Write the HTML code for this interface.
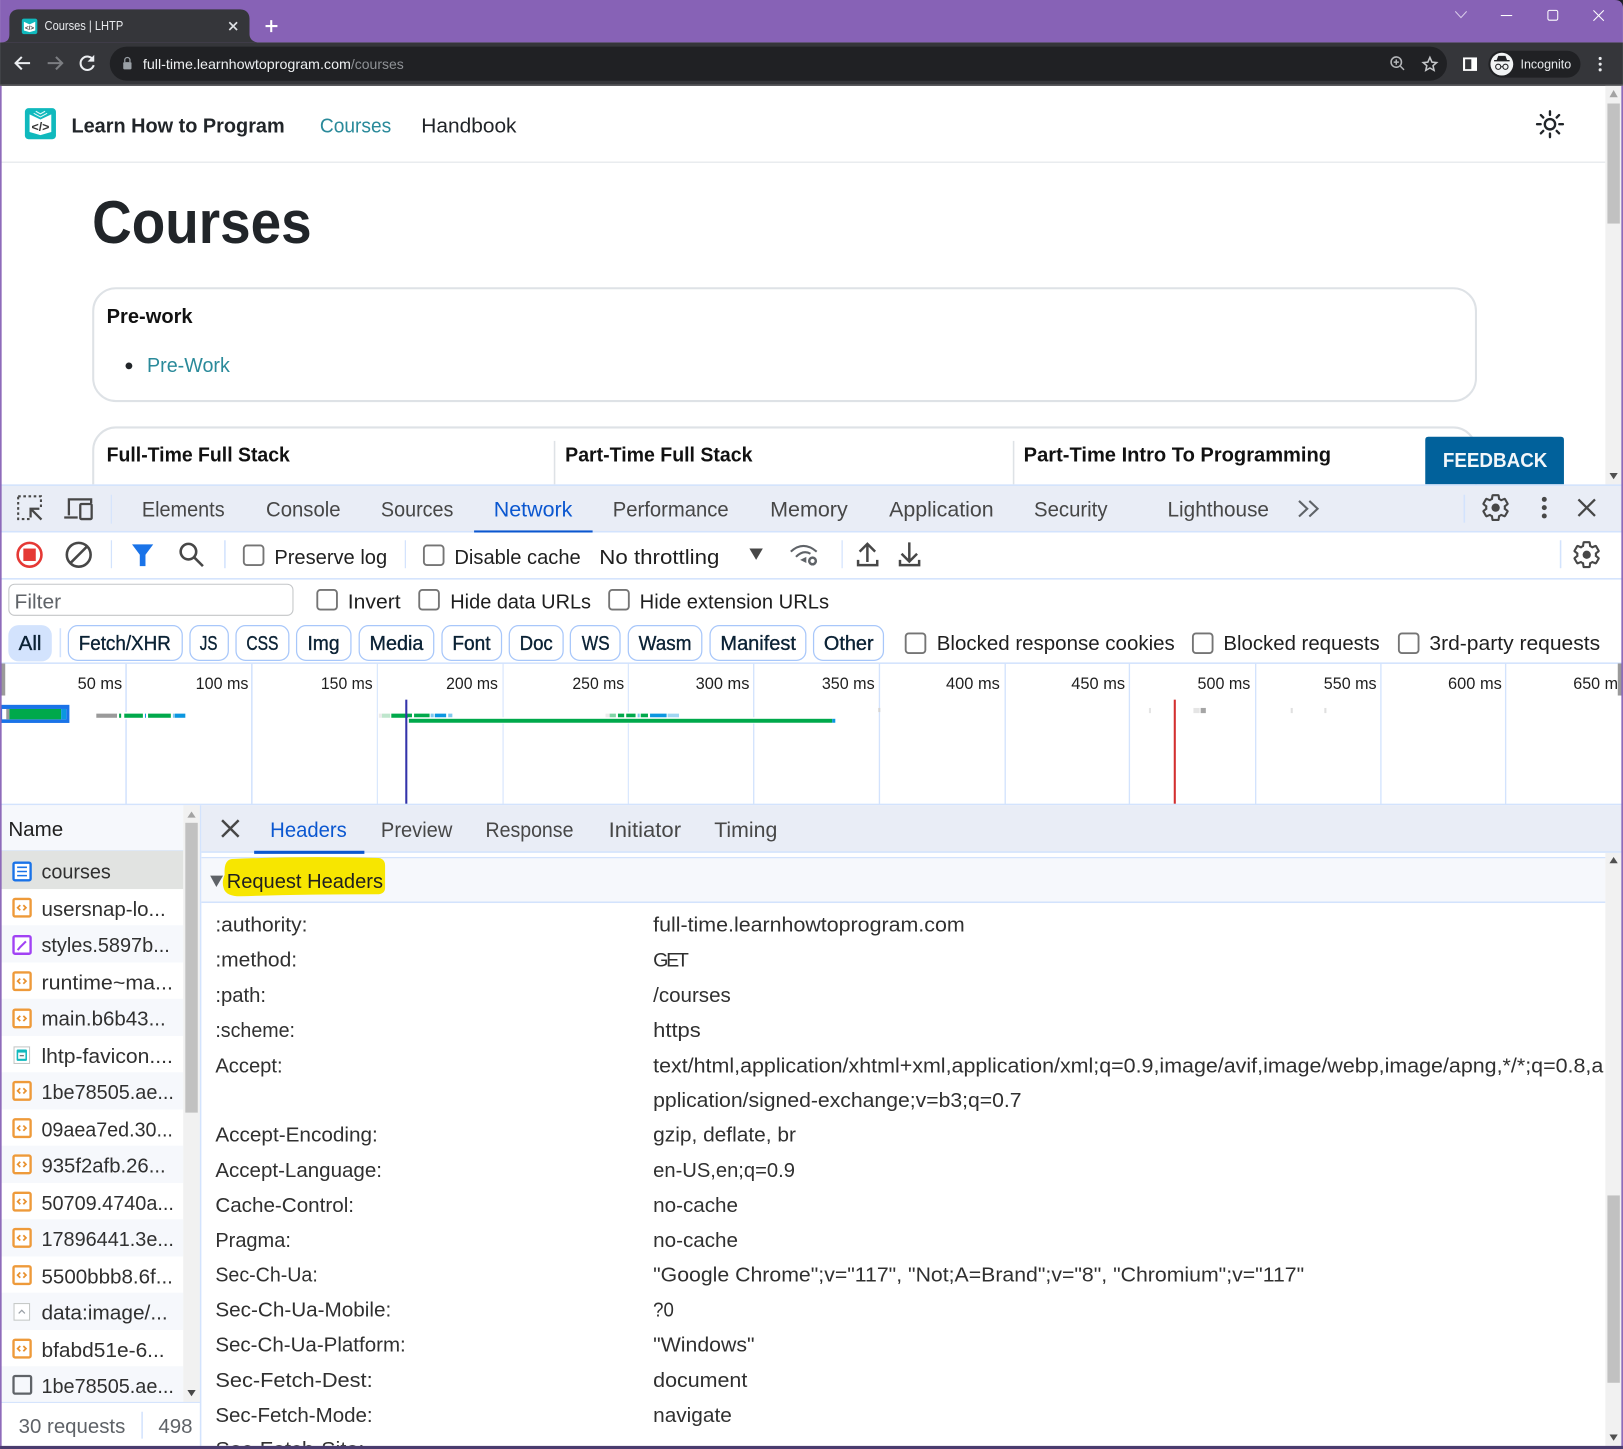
<!DOCTYPE html>
<html><head><meta charset="utf-8"><title>Courses | LHTP</title>
<style>
html,body{margin:0;padding:0;background:#fff;overflow:hidden}
svg{display:block}
text{font-family:"Liberation Sans",sans-serif;white-space:pre}
.d{font-size:20px;fill:#303030}
.t{font-size:20.5px;fill:#474747}
.n{font-size:19.5px;fill:#1f1f1f}
.p{font-size:19.5px;fill:#0b2235;stroke:#0b2235;stroke-width:.35}
.m{font-size:16.5px;fill:#1f1f1f}
.b{font-size:20px;fill:#111;font-weight:bold}
.sep{fill:#d3e3fd}
</style></head><body>
<svg xmlns="http://www.w3.org/2000/svg" width="1623" height="1449" viewBox="0 0 1568 1400">
<defs>
<g id="js"><rect x="13" y="-8.5" width="16.500" height="17" rx="1.500" fill="#fff" stroke="#ee9a3a" stroke-width="2.300"/><path d="M19.5 -2.500L17 0L19.5 2.500M22.500 -2.500L25 0L22.500 2.500" fill="none" stroke="#e8912f" stroke-width="1.700"/></g>
<path id="gear" fill="none" stroke="#474747" stroke-width="1.700" d="M19.43 12.98c.04-.32.07-.64.07-.98s-.03-.66-.07-.98l2.11-1.65c.19-.15.24-.42.12-.64l-2-3.46c-.12-.22-.39-.3-.61-.22l-2.49 1c-.52-.4-1.08-.73-1.69-.98l-.38-2.65C14.46 2.18 14.25 2 14 2h-4c-.25 0-.46.18-.49.42l-.38 2.65c-.61.25-1.17.59-1.69.98l-2.49-1c-.23-.09-.49 0-.61.22l-2 3.46c-.13.22-.07.49.12.64l2.11 1.65c-.04.32-.07.65-.07.98s.03.66.07.98l-2.11 1.65c-.19.15-.24.42-.12.64l2 3.46c.12.22.39.3.61.22l2.49-1c.52.4 1.08.73 1.69.98l.38 2.65c.03.24.24.42.49.42h4c.25 0 .46-.18.49-.42l.38-2.65c.61-.25 1.17-.59 1.69-.98l2.49 1c.23.09.49 0 .61-.22l2-3.46c.12-.22.07-.49-.12-.64l-2.11-1.65z"/>
<clipPath id="page"><rect x="0" y="83" width="1551" height="385"/></clipPath>
<clipPath id="rp"><rect x="195" y="872" width="1356" height="525"/></clipPath>
<clipPath id="tl"><rect x="0" y="641" width="1563" height="136"/></clipPath>
</defs>

<!-- window chrome -->
<rect width="1568" height="1400" fill="#fff"/>
<rect width="1568" height="41" fill="#8762b6"/>
<path d="M1 41C7 41 9 38 9 33V18C9 12 13 9 18 9H232C238 9 241 13 241 18V33C241 38 245 41 250 41Z" fill="#35363a"/>
<rect x="21" y="18" width="15" height="15" rx="2" fill="#10b9bd"/>
<path d="M23 21L28.500 23.500L34 21V29.500L28.500 31L23 29.500Z" fill="#fff"/>
<text x="28.500" y="29" text-anchor="middle" font-size="6" font-weight="bold" fill="#333">&lt;/&gt;</text>
<text x="43" y="29" font-size="12.500" fill="#e8eaed" textLength="76" lengthAdjust="spacingAndGlyphs">Courses | LHTP</text>
<path d="M221.500 21.500L229 29M229 21.500L221.500 29" stroke="#dfe1e5" stroke-width="1.600"/>
<path d="M262 19.500V31M256.500 25.200H268" stroke="#fff" stroke-width="2"/>
<path d="M1406 11L1411.500 17L1417 11" fill="none" stroke="#d8cbe9" stroke-width="1"/>
<path d="M1450 15H1461" stroke="#fff" stroke-width="1"/>
<rect x="1495.500" y="10" width="9.500" height="9.500" rx="1.500" fill="none" stroke="#fff" stroke-width="1"/>
<path d="M1539.500 10L1549.500 20M1549.500 10L1539.500 20" stroke="#fff" stroke-width="1"/>
<rect y="41" width="1568" height="42" fill="#35363a"/>
<rect y="81.500" width="1568" height="1.500" fill="#5a5b5e"/>
<rect x="106" y="45" width="1292" height="33" rx="16.500" fill="#202124"/>
<path d="M29 61H15.500M21 55L15 61L21 67" fill="none" stroke="#eceef1" stroke-width="2"/>
<path d="M46 61H59.500M54 55L60 61L54 67" fill="none" stroke="#7c7e82" stroke-width="2"/>
<path d="M90 58A6.500 6.500 0 1 0 90.500 63" fill="none" stroke="#eceef1" stroke-width="2"/><path d="M91 53V59.500H84.500Z" fill="#eceef1"/>
<rect x="119" y="60" width="8" height="7" rx="1" fill="#9aa0a6"/><path d="M120.500 60V58A2.500 2.500 0 0 1 125.500 58V60" fill="none" stroke="#9aa0a6" stroke-width="1.200"/>
<text x="138" y="66.500" font-size="13.500" fill="#eef0f2" textLength="201" lengthAdjust="spacingAndGlyphs">full-time.learnhowtoprogram.com</text>
<text x="339" y="66.500" font-size="13.500" fill="#8f9296" textLength="51" lengthAdjust="spacingAndGlyphs">/courses</text>
<circle cx="1349" cy="60" r="5" fill="none" stroke="#b4b6b9" stroke-width="1.500"/><path d="M1353 64L1356.500 67.500M1346.500 60H1351.500M1349 57.500V62.500" stroke="#b4b6b9" stroke-width="1.400"/>
<path d="M1381.500 55.500L1383.500 60L1388 60.500L1384.500 63.500L1385.500 68L1381.500 65.700L1377.500 68L1378.500 63.500L1375 60.500L1379.500 60Z" fill="none" stroke="#c4c6c9" stroke-width="1.500"/>
<rect x="1413.500" y="55.500" width="13.500" height="13" fill="#fff"/><rect x="1415.500" y="57.300" width="6" height="9.500" fill="#35363a"/>
<rect x="1438" y="49" width="89" height="26" rx="13" fill="#202124"/>
<circle cx="1451" cy="62" r="11" fill="#f1f3f4"/>
<path d="M1446 58L1447.500 54H1454.500L1456 58H1458.500V59.300H1443.500V58Z" fill="#202124"/>
<circle cx="1447.500" cy="64.500" r="2.500" fill="none" stroke="#202124" stroke-width="1"/><circle cx="1454.500" cy="64.500" r="2.500" fill="none" stroke="#202124" stroke-width="1"/><path d="M1450 64.500H1452" stroke="#202124"/>
<text x="1469" y="66" font-size="12.500" fill="#e8eaed" textLength="49" lengthAdjust="spacingAndGlyphs">Incognito</text>
<circle cx="1546" cy="56.500" r="1.500" fill="#e8eaed"/><circle cx="1546" cy="62" r="1.500" fill="#e8eaed"/><circle cx="1546" cy="67.500" r="1.500" fill="#e8eaed"/>

<!-- page -->
<g clip-path="url(#page)">
<rect y="156" width="1551" height="1.500" fill="#e9ecef"/>
<rect x="24" y="104.500" width="30" height="30" rx="3.500" fill="#10b9bd"/>
<path d="M28.500 110.500L39 115.500L49.500 110.500V127.500L39 130.500L28.500 127.500Z" fill="#fff"/>
<path d="M34.500 107.500L39 110L43.500 107.500M32.500 109.500L39 113L45.500 109.500" fill="none" stroke="#e4f8f8" stroke-width="1"/>
<text x="39" y="126.500" text-anchor="middle" font-size="12" font-weight="bold" fill="#333">&lt;/&gt;</text>
<text x="69" y="128" font-size="20" font-weight="bold" fill="#212529" textLength="206" lengthAdjust="spacingAndGlyphs">Learn How to Program</text>
<text x="309" y="128" font-size="20" fill="#2a8a9a" textLength="69" lengthAdjust="spacingAndGlyphs">Courses</text>
<text x="407" y="128" font-size="20" fill="#212529" textLength="92" lengthAdjust="spacingAndGlyphs">Handbook</text>
<circle cx="1497.500" cy="120" r="5" fill="none" stroke="#212529" stroke-width="2.300"/>
<path d="M1497.500 107.500V111M1497.500 129V132.500M1485 120H1488.500M1506.500 120H1510M1488.700 111.200L1491 113.500M1504 126.500L1506.300 128.800M1488.700 128.800L1491 126.500M1504 113.500L1506.300 111.200" stroke="#212529" stroke-width="2.300" stroke-linecap="round"/>
<text x="89" y="235" font-size="58" font-weight="bold" fill="#212529" textLength="212" lengthAdjust="spacingAndGlyphs">Courses</text>
<rect x="90" y="278.500" width="1336" height="109" rx="22" fill="#fff" stroke="#dee2e6" stroke-width="2"/>
<text x="103" y="312" font-size="20" font-weight="bold" fill="#111" textLength="83" lengthAdjust="spacingAndGlyphs">Pre-work</text>
<circle cx="124.500" cy="353.500" r="3.300" fill="#212529"/>
<text x="142" y="359.500" font-size="20" fill="#2a8a9a" textLength="80" lengthAdjust="spacingAndGlyphs">Pre-Work</text>
<rect x="90" y="413" width="1336" height="120" rx="22" fill="#fff" stroke="#dee2e6" stroke-width="2"/>
<rect x="535" y="426" width="1.500" height="60" fill="#dee2e6"/><rect x="978.500" y="426" width="1.500" height="60" fill="#dee2e6"/>
<text x="103" y="446" class="b" textLength="177" lengthAdjust="spacingAndGlyphs">Full-Time Full Stack</text>
<text x="546" y="446" class="b" textLength="181" lengthAdjust="spacingAndGlyphs">Part-Time Full Stack</text>
<text x="989" y="446" class="b" textLength="297" lengthAdjust="spacingAndGlyphs">Part-Time Intro To Programming</text>
<path d="M1377 468V425Q1377 422 1380 422H1508Q1511 422 1511 425V468Z" fill="#01619b"/>
<text x="1394" y="451" font-size="20" font-weight="bold" fill="#f2f7fa" textLength="101" lengthAdjust="spacingAndGlyphs">FEEDBACK</text>
</g>
<rect x="1551" y="83" width="17" height="385" fill="#f1f1f1"/>
<rect x="1553" y="100" width="12" height="116" fill="#c1c1c1"/>
<path d="M1559 87L1563 94H1555Z" fill="#a3a3a3"/><path d="M1555 457L1563 457L1559 463Z" fill="#505050"/>

<!-- devtools top tabs -->
<rect y="468" width="1568" height="46" fill="#e9edf6"/>
<rect y="468" width="1568" height="1.500" fill="#d3e3fd"/>
<rect y="513" width="1568" height="1.500" fill="#d3e3fd"/>
<rect x="458" y="512.500" width="114.500" height="2" fill="#0b57d0"/>
<rect x="17.500" y="479.500" width="22" height="22" fill="none" stroke="#474747" stroke-width="2" stroke-dasharray="2.500 2.500"/>
<rect x="30" y="490" width="12" height="14" fill="#e9edf6"/>
<path d="M40 502L29.500 491.500M29.500 500V491.500H38" fill="none" stroke="#474747" stroke-width="2.200"/>
<path d="M66.500 498V482.500H88V486M62 500H75" fill="none" stroke="#474747" stroke-width="2.200"/>
<rect x="77.500" y="487" width="11" height="14.500" rx="1" fill="none" stroke="#474747" stroke-width="2.200"/>
<rect x="107" y="478" width="1" height="28" class="sep"/>
<text x="137" y="499" class="t" textLength="80" lengthAdjust="spacingAndGlyphs">Elements</text>
<text x="257" y="499" class="t" textLength="72" lengthAdjust="spacingAndGlyphs">Console</text>
<text x="368" y="499" class="t" textLength="70" lengthAdjust="spacingAndGlyphs">Sources</text>
<text x="477" y="499" class="t" style="fill:#0b57d0" textLength="76" lengthAdjust="spacingAndGlyphs">Network</text>
<text x="592" y="499" class="t" textLength="112" lengthAdjust="spacingAndGlyphs">Performance</text>
<text x="744" y="499" class="t" textLength="75" lengthAdjust="spacingAndGlyphs">Memory</text>
<text x="859" y="499" class="t" textLength="101" lengthAdjust="spacingAndGlyphs">Application</text>
<text x="999" y="499" class="t" textLength="71" lengthAdjust="spacingAndGlyphs">Security</text>
<text x="1128" y="499" class="t" textLength="98" lengthAdjust="spacingAndGlyphs">Lighthouse</text>
<path d="M1255 484L1263 491.500L1255 499M1265 484L1273 491.500L1265 499" fill="none" stroke="#5f6368" stroke-width="2"/>
<rect x="1414" y="478" width="1.500" height="27" class="sep"/>
<use href="#gear" transform="translate(1430.500,476) scale(1.200)"/><circle cx="1445" cy="490.500" r="4" fill="#474747"/>
<circle cx="1492" cy="482.500" r="2.400" fill="#474747"/><circle cx="1492" cy="490.500" r="2.400" fill="#474747"/><circle cx="1492" cy="498.500" r="2.400" fill="#474747"/>
<path d="M1525 482.500L1541 498.500M1541 482.500L1525 498.500" stroke="#474747" stroke-width="2.200"/>

<!-- toolbar -->
<rect y="558.500" width="1568" height="1.500" fill="#d3e3fd"/>
<circle cx="28.500" cy="536" r="11.500" fill="none" stroke="#e53935" stroke-width="2.500"/><rect x="22.500" y="530" width="12" height="12" fill="#e53935"/>
<circle cx="76" cy="536" r="11.500" fill="none" stroke="#474747" stroke-width="2.500"/><path d="M84 528L68 544" stroke="#474747" stroke-width="2.500"/>
<rect x="107" y="522" width="1.200" height="27" class="sep"/>
<path d="M127.500 526H148L140.500 536V547H135V536Z" fill="#1a73e8"/>
<circle cx="182" cy="533" r="7.500" fill="none" stroke="#474747" stroke-width="2.500"/><path d="M187.500 538.500L196 547" stroke="#474747" stroke-width="2.500"/>
<rect x="216.500" y="522" width="1.500" height="27" class="sep"/>
<rect x="235.500" y="527" width="19" height="19" rx="3" fill="#fff" stroke="#757575" stroke-width="1.800"/>
<text x="265" y="545" class="n" textLength="109" lengthAdjust="spacingAndGlyphs">Preserve log</text>
<rect x="391" y="522" width="1.200" height="27" class="sep"/>
<rect x="409.500" y="527" width="19" height="19" rx="3" fill="#fff" stroke="#757575" stroke-width="1.800"/>
<text x="439" y="545" class="n" textLength="122" lengthAdjust="spacingAndGlyphs">Disable cache</text>
<text x="579" y="545" class="n" textLength="116" lengthAdjust="spacingAndGlyphs">No throttling</text>
<path d="M724 530H737L730.500 541Z" fill="#474747"/>
<path d="M764 533Q776 522 789 533M769 538Q776 531 783 535" fill="none" stroke="#5f6368" stroke-width="2"/>
<path d="M779 538V544L773 541Z" fill="#5f6368"/><circle cx="785" cy="542" r="3.200" fill="none" stroke="#5f6368" stroke-width="2.400"/>
<rect x="813" y="522" width="1.200" height="27" class="sep"/>
<path d="M838 543V526M830.500 533L838 525.500L845.500 533" fill="none" stroke="#474747" stroke-width="2.400"/><path d="M829 541V546H847.500V541" fill="none" stroke="#474747" stroke-width="2.400"/>
<path d="M878.500 524V542M871 535L878.500 542.500L886 535" fill="none" stroke="#474747" stroke-width="2.400"/><path d="M869.500 541V546H888V541" fill="none" stroke="#474747" stroke-width="2.400"/>
<rect x="1507" y="522" width="1.500" height="27" class="sep"/>
<use href="#gear" transform="translate(1518.500,521.500) scale(1.200)"/><circle cx="1533" cy="536" r="4" fill="#474747"/>

<!-- filter row -->
<rect x="8.500" y="564.500" width="274.500" height="30" rx="5.500" fill="#fff" stroke="#c4c6c8" stroke-width="1"/>
<text x="14" y="588" class="n" style="fill:#5f6368" textLength="45" lengthAdjust="spacingAndGlyphs">Filter</text>
<rect x="306.500" y="570" width="19" height="19" rx="3" fill="#fff" stroke="#757575" stroke-width="1.800"/>
<text x="336" y="588" class="n" textLength="51" lengthAdjust="spacingAndGlyphs">Invert</text>
<rect x="405" y="570" width="19" height="19" rx="3" fill="#fff" stroke="#757575" stroke-width="1.800"/>
<text x="435" y="588" class="n" textLength="136" lengthAdjust="spacingAndGlyphs">Hide data URLs</text>
<rect x="588.500" y="570" width="19" height="19" rx="3" fill="#fff" stroke="#757575" stroke-width="1.800"/>
<text x="618" y="588" class="n" textLength="183" lengthAdjust="spacingAndGlyphs">Hide extension URLs</text>

<!-- type pills -->
<g fill="#fff" stroke="#a8c7fa" stroke-width="1.200">
<rect x="66" y="604.500" width="110" height="33.500" rx="9"/><rect x="183.500" y="604.500" width="37" height="33.500" rx="9"/><rect x="228" y="604.500" width="51" height="33.500" rx="9"/><rect x="286.500" y="604.500" width="52.500" height="33.500" rx="9"/><rect x="347" y="604.500" width="72" height="33.500" rx="9"/><rect x="427" y="604.500" width="57.500" height="33.500" rx="9"/><rect x="492" y="604.500" width="52" height="33.500" rx="9"/><rect x="551" y="604.500" width="48" height="33.500" rx="9"/><rect x="607" y="604.500" width="71" height="33.500" rx="9"/><rect x="686" y="604.500" width="92.500" height="33.500" rx="9"/><rect x="786" y="604.500" width="67.500" height="33.500" rx="9"/>
</g>
<rect x="8" y="604" width="42" height="35" rx="10" fill="#d3e3fd"/>
<rect x="57.500" y="607" width="1.500" height="28" class="sep"/>
<text x="18" y="628" class="p" textLength="22" lengthAdjust="spacingAndGlyphs">All</text>
<text x="76" y="628" class="p" textLength="89" lengthAdjust="spacingAndGlyphs">Fetch/XHR</text>
<text x="193" y="628" class="p" textLength="17" lengthAdjust="spacingAndGlyphs">JS</text>
<text x="238" y="628" class="p" textLength="31" lengthAdjust="spacingAndGlyphs">CSS</text>
<text x="297" y="628" class="p" textLength="31" lengthAdjust="spacingAndGlyphs">Img</text>
<text x="357" y="628" class="p" textLength="52" lengthAdjust="spacingAndGlyphs">Media</text>
<text x="437" y="628" class="p" textLength="37" lengthAdjust="spacingAndGlyphs">Font</text>
<text x="502" y="628" class="p" textLength="32" lengthAdjust="spacingAndGlyphs">Doc</text>
<text x="562" y="628" class="p" textLength="27" lengthAdjust="spacingAndGlyphs">WS</text>
<text x="617" y="628" class="p" textLength="51" lengthAdjust="spacingAndGlyphs">Wasm</text>
<text x="696" y="628" class="p" textLength="73" lengthAdjust="spacingAndGlyphs">Manifest</text>
<text x="796" y="628" class="p" textLength="48" lengthAdjust="spacingAndGlyphs">Other</text>
<rect x="875" y="612" width="19" height="19" rx="3" fill="#fff" stroke="#757575" stroke-width="1.800"/>
<text x="905" y="628" class="n" textLength="230" lengthAdjust="spacingAndGlyphs">Blocked response cookies</text>
<rect x="1152.500" y="612" width="19" height="19" rx="3" fill="#fff" stroke="#757575" stroke-width="1.800"/>
<text x="1182" y="628" class="n" textLength="151" lengthAdjust="spacingAndGlyphs">Blocked requests</text>
<rect x="1351.500" y="612" width="19" height="19" rx="3" fill="#fff" stroke="#757575" stroke-width="1.800"/>
<text x="1381" y="628" class="n" textLength="165" lengthAdjust="spacingAndGlyphs">3rd-party requests</text>
<rect y="640" width="1568" height="1.500" fill="#d3e3fd"/>

<!-- timeline -->
<g clip-path="url(#tl)">
<g fill="#d3e3fd">
<rect x="121" y="641" width="1.500" height="136"/><rect x="242.500" y="641" width="1.500" height="136"/><rect x="364" y="641" width="1" height="136"/><rect x="485.500" y="641" width="1" height="136"/><rect x="606.500" y="641" width="1" height="136"/><rect x="727.500" y="641" width="1.300" height="136"/><rect x="849" y="641" width="1.300" height="136"/><rect x="970.500" y="641" width="1.300" height="136"/><rect x="1090.500" y="641" width="1.300" height="136"/><rect x="1212.500" y="641" width="1.300" height="136"/><rect x="1333.500" y="641" width="1.300" height="136"/><rect x="1454" y="641" width="1.300" height="136"/>
</g>
<rect x="0" y="641" width="5" height="31" fill="#9a9a9a"/>
<text x="75" y="665.500" class="m" textLength="43" lengthAdjust="spacingAndGlyphs">50 ms</text>
<text x="189" y="665.500" class="m" textLength="51" lengthAdjust="spacingAndGlyphs">100 ms</text>
<text x="310" y="665.500" class="m" textLength="50" lengthAdjust="spacingAndGlyphs">150 ms</text>
<text x="431" y="665.500" class="m" textLength="50" lengthAdjust="spacingAndGlyphs">200 ms</text>
<text x="553" y="665.500" class="m" textLength="50" lengthAdjust="spacingAndGlyphs">250 ms</text>
<text x="672" y="665.500" class="m" textLength="52" lengthAdjust="spacingAndGlyphs">300 ms</text>
<text x="794" y="665.500" class="m" textLength="51" lengthAdjust="spacingAndGlyphs">350 ms</text>
<text x="914" y="665.500" class="m" textLength="52" lengthAdjust="spacingAndGlyphs">400 ms</text>
<text x="1035" y="665.500" class="m" textLength="52" lengthAdjust="spacingAndGlyphs">450 ms</text>
<text x="1157" y="665.500" class="m" textLength="51" lengthAdjust="spacingAndGlyphs">500 ms</text>
<text x="1279" y="665.500" class="m" textLength="51" lengthAdjust="spacingAndGlyphs">550 ms</text>
<text x="1399" y="665.500" class="m" textLength="52" lengthAdjust="spacingAndGlyphs">600 ms</text>
<text x="1520" y="665.500" class="m" textLength="51" lengthAdjust="spacingAndGlyphs">650 ms</text>
<rect x="1" y="681" width="66" height="17.500" fill="#1a73e8"/>
<rect x="2" y="685" width="62" height="10" fill="#fff"/>
<rect x="6" y="685" width="3" height="10" fill="#9a9a9a"/><rect x="9" y="685" width="50" height="10" fill="#00a94b"/><rect x="59" y="685" width="5" height="10" fill="#0b97e0"/>
<rect x="92" y="688" width="88" height="7" fill="#fff"/>
<rect x="93" y="689.500" width="20" height="4" fill="#9a9a9a"/><rect x="115" y="689.500" width="2" height="4" fill="#00a94b"/><rect x="120" y="689.500" width="18" height="4" fill="#00a94b"/><rect x="140" y="689.500" width="1" height="4" fill="#0b97e0"/><rect x="143" y="689.500" width="22" height="4" fill="#00a94b"/><rect x="167" y="689.500" width="2" height="4" fill="#7fc8ee"/><rect x="169" y="689.500" width="10" height="4" fill="#0b97e0"/>
<rect x="365" y="688" width="72" height="5.500" fill="#fff"/>
<rect x="366" y="689.500" width="3" height="4" fill="#ececec"/><rect x="369" y="689.500" width="8" height="4" fill="#bfe6cd"/><rect x="378" y="689.500" width="20" height="4" fill="#00a94b"/><rect x="400" y="689.500" width="15" height="4" fill="#00a94b"/><rect x="416" y="689.500" width="3" height="4" fill="#7fc8ee"/><rect x="420" y="689.500" width="11" height="4" fill="#0b97e0"/><rect x="433" y="689.500" width="4" height="4" fill="#7fc8ee"/>
<rect x="585" y="688" width="72" height="5.500" fill="#fff"/>
<rect x="585" y="689.500" width="4" height="4" fill="#ececec"/><rect x="589" y="689.500" width="6" height="4" fill="#7fd4a5"/><rect x="597" y="689.500" width="6" height="4" fill="#00a94b"/><rect x="605" y="689.500" width="9" height="4" fill="#00a94b"/><rect x="616" y="689.500" width="2" height="4" fill="#7fc8ee"/><rect x="619" y="689.500" width="7" height="4" fill="#00a94b"/><rect x="628" y="689.500" width="16" height="4" fill="#0b97e0"/><rect x="645" y="689.500" width="11" height="4" fill="#9fd6f2"/>
<rect x="394" y="693" width="415" height="6" fill="#fff"/>
<rect x="395" y="694.500" width="409" height="3.800" fill="#00a94b"/><rect x="804" y="694.500" width="3" height="3.800" fill="#0b97e0"/>
<rect x="848.500" y="684" width="2" height="4" fill="#d5d5d5"/><rect x="1110" y="684" width="2" height="5" fill="#e5e5e5"/><rect x="1153" y="684" width="6" height="5" fill="#e5e5e5"/><rect x="1160" y="684" width="5" height="5" fill="#a5a5a5"/><rect x="1247" y="684" width="2" height="5" fill="#e0e0e0"/><rect x="1279.500" y="684" width="2" height="5" fill="#e0e0e0"/>
<rect x="391.500" y="676" width="2" height="101" fill="#3333aa"/>
<rect x="1134" y="676" width="2" height="101" fill="#d32f2f"/>
</g>
<rect x="1563" y="641" width="4" height="31" fill="#9a9a9a"/>
<rect y="776.500" width="1568" height="1.500" fill="#d3e3fd"/>

<!-- name column -->
<rect x="1" y="778" width="176" height="44" fill="#f6f8fc"/>
<text x="8" y="807.500" class="n" textLength="53" lengthAdjust="spacingAndGlyphs">Name</text>
<rect x="1" y="821.500" width="176" height="1" fill="#d3e3fd"/>
<g fill="#f6f8fc">
<rect x="1" y="894" width="176" height="36"/><rect x="1" y="965" width="176" height="36"/><rect x="1" y="1036" width="176" height="36"/><rect x="1" y="1107" width="176" height="36"/><rect x="1" y="1178" width="176" height="36"/><rect x="1" y="1249" width="176" height="36"/><rect x="1" y="1320" width="176" height="35"/>
</g>
<rect x="1" y="822" width="176" height="37" fill="#e1e3e1"/>
<rect x="177" y="778" width="16" height="577" fill="#f1f1f1"/>
<rect x="179" y="795" width="12" height="280" fill="#c1c1c1"/>
<path d="M185 784L189 790H181Z" fill="#a3a3a3"/><path d="M181 1343H189L185 1349Z" fill="#474747"/>
<rect x="193" y="778" width="1.500" height="619" fill="#d3e3fd"/>
<rect x="13" y="833.500" width="16.500" height="17" rx="1.500" fill="#fff" stroke="#1a73e8" stroke-width="2.300"/><path d="M16.500 838H26M16.500 842H26M16.500 846H26" stroke="#1a73e8" stroke-width="1.500"/>
<text x="40" y="849" class="d" textLength="67" lengthAdjust="spacingAndGlyphs">courses</text>
<use href="#js" y="877"/><text x="40" y="885" class="d" textLength="120" lengthAdjust="spacingAndGlyphs">usersnap-lo...</text>
<rect x="13" y="904.500" width="16.500" height="17" rx="1.500" fill="#fff" stroke="#a142f4" stroke-width="2.300"/><path d="M17 918L19 915.500L25 909.500" fill="none" stroke="#a142f4" stroke-width="2"/>
<text x="40" y="920" class="d" textLength="124" lengthAdjust="spacingAndGlyphs">styles.5897b...</text>
<use href="#js" y="948"/><text x="40" y="956" class="d" textLength="127" lengthAdjust="spacingAndGlyphs">runtime~ma...</text>
<use href="#js" y="984"/><text x="40" y="991" class="d" textLength="120" lengthAdjust="spacingAndGlyphs">main.b6b43...</text>
<rect x="13.500" y="1011.500" width="15" height="16" fill="#fff" stroke="#c4c7c5"/><rect x="16" y="1014" width="10" height="11" rx="1" fill="#10b9bd"/><rect x="17.500" y="1017" width="7" height="6" fill="#f4fbfb"/><path d="M19 1020H23" stroke="#555" stroke-width="1"/>
<text x="40" y="1027" class="d" textLength="127" lengthAdjust="spacingAndGlyphs">lhtp-favicon....</text>
<use href="#js" y="1054"/><text x="40" y="1062" class="d" textLength="128" lengthAdjust="spacingAndGlyphs">1be78505.ae...</text>
<use href="#js" y="1090"/><text x="40" y="1098" class="d" textLength="127" lengthAdjust="spacingAndGlyphs">09aea7ed.30...</text>
<use href="#js" y="1125"/><text x="40" y="1133" class="d" textLength="120" lengthAdjust="spacingAndGlyphs">935f2afb.26...</text>
<use href="#js" y="1161"/><text x="40" y="1169" class="d" textLength="128" lengthAdjust="spacingAndGlyphs">50709.4740a...</text>
<use href="#js" y="1196"/><text x="40" y="1204" class="d" textLength="128" lengthAdjust="spacingAndGlyphs">17896441.3e...</text>
<use href="#js" y="1232"/><text x="40" y="1240" class="d" textLength="127" lengthAdjust="spacingAndGlyphs">5500bbb8.6f...</text>
<rect x="13.500" y="1259.500" width="15" height="16" fill="#fff" stroke="#c4c7c5"/><path d="M18 1269L21 1266L24 1269" fill="none" stroke="#9aa0a6" stroke-width="1.200"/>
<text x="40" y="1275" class="d" textLength="122" lengthAdjust="spacingAndGlyphs">data:image/...</text>
<use href="#js" y="1303"/><text x="40" y="1311" class="d" textLength="119" lengthAdjust="spacingAndGlyphs">bfabd51e-6...</text>
<rect x="13" y="1329.500" width="17" height="17" rx="1.500" fill="none" stroke="#5f6368" stroke-width="2.200"/>
<text x="40" y="1346" class="d" textLength="128" lengthAdjust="spacingAndGlyphs">1be78505.ae...</text>
<rect x="1" y="1354.500" width="193" height="1" fill="#d3e3fd"/>
<text x="18" y="1384.500" class="d" style="fill:#5f6368" textLength="103" lengthAdjust="spacingAndGlyphs">30 requests</text>
<rect x="136.500" y="1364" width="1.500" height="26" fill="#d3e3fd"/>
<text x="153" y="1384.500" class="d" style="fill:#5f6368" textLength="33" lengthAdjust="spacingAndGlyphs">498</text>

<!-- right panel -->
<rect x="194.500" y="778" width="1373" height="45" fill="#e9edf6"/>
<rect x="194.500" y="822.500" width="1373" height="1.500" fill="#d3e3fd"/>
<path d="M214.500 792.500L230.500 808.500M230.500 792.500L214.500 808.500" stroke="#474747" stroke-width="2.400"/>
<rect x="245.500" y="822" width="106.500" height="3" fill="#0b57d0"/>
<text x="261" y="808.500" class="t" style="fill:#0b57d0" textLength="74" lengthAdjust="spacingAndGlyphs">Headers</text>
<text x="368" y="808.500" class="t" textLength="69" lengthAdjust="spacingAndGlyphs">Preview</text>
<text x="469" y="808.500" class="t" textLength="85" lengthAdjust="spacingAndGlyphs">Response</text>
<text x="588" y="808.500" class="t" textLength="70" lengthAdjust="spacingAndGlyphs">Initiator</text>
<text x="690" y="808.500" class="t" textLength="61" lengthAdjust="spacingAndGlyphs">Timing</text>
<rect x="194.500" y="828" width="1356.500" height="44" fill="#f6f8fc"/>
<rect x="194.500" y="828" width="1356.500" height="1.200" fill="#d3e3fd"/>
<rect x="194.500" y="871" width="1356.500" height="1.500" fill="#d3e3fd"/>
<path d="M224 830Q290 827 366 829Q372 830 372 836V858Q372 863 366 864Q290 864 232 866Q218 866 216 858Q214 852 217 845Q216 831 224 830Z" fill="#f7e600"/>
<path d="M203 846H215.500L209 857Z" fill="#5f6368"/>
<text x="219" y="858" class="d" style="fill:#1f1f1f" textLength="151" lengthAdjust="spacingAndGlyphs">Request Headers</text>
<g clip-path="url(#rp)">
<text x="208" y="900" class="d" textLength="89" lengthAdjust="spacingAndGlyphs">:authority:</text><text x="631" y="900" class="d" textLength="301" lengthAdjust="spacingAndGlyphs">full-time.learnhowtoprogram.com</text>
<text x="208" y="934" class="d" textLength="79" lengthAdjust="spacingAndGlyphs">:method:</text><text x="631" y="934" class="d" style="font-size:19px" textLength="34.500" lengthAdjust="spacing">GET</text>
<text x="208" y="968" class="d" textLength="49" lengthAdjust="spacingAndGlyphs">:path:</text><text x="631" y="968" class="d" textLength="75" lengthAdjust="spacingAndGlyphs">/courses</text>
<text x="208" y="1002" class="d" textLength="77" lengthAdjust="spacingAndGlyphs">:scheme:</text><text x="631" y="1002" class="d" textLength="46" lengthAdjust="spacingAndGlyphs">https</text>
<text x="208" y="1036" class="d" textLength="65" lengthAdjust="spacingAndGlyphs">Accept:</text><text x="631" y="1036" class="d" textLength="918" lengthAdjust="spacingAndGlyphs">text/html,application/xhtml+xml,application/xml;q=0.9,image/avif,image/webp,image/apng,*/*;q=0.8,a</text>
<text x="631" y="1069.500" class="d" textLength="356" lengthAdjust="spacingAndGlyphs">pplication/signed-exchange;v=b3;q=0.7</text>
<text x="208" y="1103" class="d" textLength="157" lengthAdjust="spacingAndGlyphs">Accept-Encoding:</text><text x="631" y="1103" class="d" textLength="138" lengthAdjust="spacingAndGlyphs">gzip, deflate, br</text>
<text x="208" y="1137" class="d" textLength="161" lengthAdjust="spacingAndGlyphs">Accept-Language:</text><text x="631" y="1137" class="d" textLength="137" lengthAdjust="spacingAndGlyphs">en-US,en;q=0.9</text>
<text x="208" y="1171" class="d" textLength="134" lengthAdjust="spacingAndGlyphs">Cache-Control:</text><text x="631" y="1171" class="d" textLength="82" lengthAdjust="spacingAndGlyphs">no-cache</text>
<text x="208" y="1205" class="d" textLength="73" lengthAdjust="spacingAndGlyphs">Pragma:</text><text x="631" y="1205" class="d" textLength="82" lengthAdjust="spacingAndGlyphs">no-cache</text>
<text x="208" y="1238" class="d" textLength="99" lengthAdjust="spacingAndGlyphs">Sec-Ch-Ua:</text><text x="631" y="1238" class="d" textLength="629" lengthAdjust="spacingAndGlyphs">"Google Chrome";v="117", "Not;A=Brand";v="8", "Chromium";v="117"</text>
<text x="208" y="1272" class="d" textLength="170" lengthAdjust="spacingAndGlyphs">Sec-Ch-Ua-Mobile:</text><text x="631" y="1272" class="d" textLength="20" lengthAdjust="spacingAndGlyphs">?0</text>
<text x="208" y="1306" class="d" textLength="184" lengthAdjust="spacingAndGlyphs">Sec-Ch-Ua-Platform:</text><text x="631" y="1306" class="d" textLength="98" lengthAdjust="spacingAndGlyphs">"Windows"</text>
<text x="208" y="1340" class="d" textLength="152" lengthAdjust="spacingAndGlyphs">Sec-Fetch-Dest:</text><text x="631" y="1340" class="d" textLength="91" lengthAdjust="spacingAndGlyphs">document</text>
<text x="208" y="1374" class="d" textLength="152" lengthAdjust="spacingAndGlyphs">Sec-Fetch-Mode:</text><text x="631" y="1374" class="d" textLength="76" lengthAdjust="spacingAndGlyphs">navigate</text>
<text x="208" y="1407" class="d" textLength="144" lengthAdjust="spacingAndGlyphs">Sec-Fetch-Site:</text>
</g>
<rect x="1551" y="824" width="16" height="573" fill="#f1f1f1"/>
<rect x="1553" y="1155" width="12" height="181" fill="#c1c1c1"/>
<path d="M1559 828L1563 834H1555Z" fill="#505050"/><path d="M1555 1386H1563L1559 1392Z" fill="#505050"/>

<!-- window edges -->
<rect x="0" y="83" width="1.500" height="1317" fill="#8762b6"/>
<rect x="1566.500" y="83" width="1.500" height="1317" fill="#8762b6"/>
<rect y="1397" width="1568" height="3" fill="#4a3c6e"/>
<path d="M1560 0H1568V8Q1568 0 1560 0Z" fill="#1c1c24"/>
</svg>
</body></html>
